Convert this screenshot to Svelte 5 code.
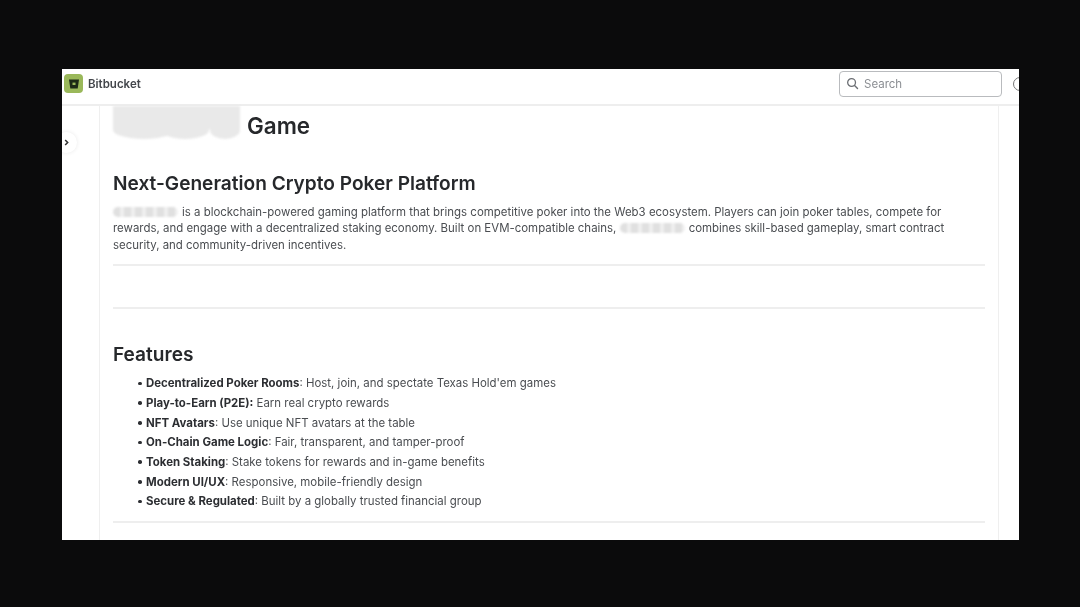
<script>
  const features = [
    ['Decentralized Poker Rooms', ': Host, join, and spectate Texas Hold\'em games'],
    ['Play-to-Earn (P2E):', ' Earn real crypto rewards'],
    ['NFT Avatars', ': Use unique NFT avatars at the table'],
    ['On-Chain Game Logic', ': Fair, transparent, and tamper-proof'],
    ['Token Staking', ': Stake tokens for rewards and in-game benefits'],
    ['Modern UI/UX', ': Responsive, mobile-friendly design'],
    ['Secure & Regulated', ': Built by a globally trusted financial group']
  ];
</script>

<div class="stage">
  <div class="window">
    <header class="topbar">
      <div class="brand">
        <span class="logo">
          <svg viewBox="0 0 12 12" width="12" height="12" aria-hidden="true">
            <path d="M1 1.6h10l-1.3 8.8H2.3z" fill="#1d2a16" />
            <rect x="4.5" y="4.6" width="3" height="2.4" fill="#9ab85a" />
          </svg>
        </span>
        <span class="brand-name">Bitbucket</span>
      </div>
      <div class="tools">
        <div class="search">
          <svg viewBox="0 0 14 14" width="13" height="13" aria-hidden="true">
            <circle cx="6" cy="6" r="4.2" fill="none" stroke="#6b6e73" stroke-width="1.4" />
            <path d="M9.2 9.2l3.2 3.2" stroke="#6b6e73" stroke-width="1.5" stroke-linecap="round" />
          </svg>
          <span>Search</span>
        </div>
        <span class="help"></span>
      </div>
    </header>

    <div class="body">
      <aside class="rail">
        <button class="expand" aria-label="Expand sidebar">
          <svg viewBox="0 0 8 8" width="7" height="7" aria-hidden="true">
            <path d="M2.5 1.2L5.3 4 2.5 6.8" fill="none" stroke="#333" stroke-width="1.8" />
          </svg>
        </button>
      </aside>
      <main class="panel">
        <div class="title-row">
          <div class="redact-title">
            <i></i><i></i><i></i>
          </div>
          <h1>Game</h1>
        </div>
        <h2 class="tagline">Next-Generation Crypto Poker Platform</h2>
        <p class="intro">
          <span class="redact first"></span>is a blockchain-powered gaming platform that brings competitive poker into the Web3 ecosystem. Players can join poker tables, compete for rewards, and engage with a decentralized staking economy. Built on EVM-compatible chains, <span class="redact second"></span>combines skill-based gameplay, smart contract security, and community-driven incentives.
        </p>
        <hr class="rule-a" />
        <hr class="rule-b" />
        <h2 class="features">Features</h2>
        <ul>
          {#each features as [name, text]}
            <li><strong>{name}</strong>{text}</li>
          {/each}
        </ul>
        <hr class="rule-c" />
      </main>
    </div>
  </div>
</div>

<style>
  :global(body) {
    margin: 0;
    background: #0b0b0c;
  }
  .stage {
    width: 1080px;
    height: 607px;
    padding: 69px 61px 67px 62px;
    box-sizing: border-box;
    overflow: hidden;
    font-family: Inter, "Liberation Sans", sans-serif;
    filter: blur(0.45px);
  }
  .window {
    height: 471px;
    background: #fff;
    display: flex;
    flex-direction: column;
    overflow: hidden;
  }
  .topbar {
    height: 37px;
    flex: none;
    box-sizing: border-box;
    border-bottom: 2px solid #eeeeee;
    display: flex;
    align-items: center;
    justify-content: space-between;
    padding: 0 0 6px 2px;
  }
  .brand {
    display: flex;
    align-items: center;
    gap: 5px;
  }
  .logo {
    width: 19px;
    height: 19px;
    border-radius: 4px;
    background: #9ab85a;
    display: flex;
    align-items: center;
    justify-content: center;
  }
  .brand-name {
    font-size: 11.5px;
    font-weight: 600;
    color: #43464b;
  }
  .tools {
    display: flex;
    align-items: center;
    gap: 11px;
    margin-right: -8px;
  }
  .search {
    width: 163px;
    height: 26px;
    box-sizing: border-box;
    border: 1.5px solid #b9bbbe;
    border-radius: 4px;
    display: flex;
    align-items: center;
    gap: 5px;
    padding-left: 6px;
    font-size: 11.5px;
    color: #8b8e93;
  }
  .help {
    width: 14px;
    height: 14px;
    box-sizing: border-box;
    border: 1.5px solid #777;
    border-radius: 50%;
  }
  .body {
    flex: 1;
    min-height: 0;
    display: flex;
  }
  .rail {
    width: 38px;
    flex: none;
    box-sizing: border-box;
    border-right: 1.5px solid #efefef;
    position: relative;
  }
  .expand {
    position: absolute;
    left: -6px;
    top: 26px;
    width: 21px;
    height: 21px;
    padding: 0;
    border: none;
    border-radius: 50%;
    background: #fff;
    box-shadow: 0 0 4px rgba(0, 0, 0, 0.09);
    display: flex;
    align-items: center;
    justify-content: center;
  }
  .panel {
    width: 898.5px;
    flex: none;
    box-sizing: border-box;
    border-right: 1.5px solid #efefef;
    padding: 0 13px 0 13px;
    color: #3f4246;
  }
  .title-row {
    display: flex;
    align-items: flex-start;
    height: 33px;
    gap: 7px;
  }
  .redact-title {
    width: 127px;
    height: 33px;
    position: relative;
    overflow: hidden;
    background: linear-gradient(#e9e9e9 0 70%, transparent 70%);
    filter: blur(0.8px);
  }
  .redact-title i {
    position: absolute;
    bottom: 0;
    height: 18px;
    background: #e9e9e9;
    border-radius: 50%;
  }
  .redact-title i:nth-child(1) { left: 0; width: 62px; }
  .redact-title i:nth-child(2) { left: 48px; width: 48px; }
  .redact-title i:nth-child(3) { left: 97px; width: 30px; }
  h1 {
    margin: 3px 0 0;
    font-size: 22.4px;
    line-height: 33px;
    font-weight: 600;
    color: #26282b;
  }
  h2 {
    margin: 0;
    font-size: 19.1px;
    line-height: 26px;
    font-weight: 600;
    color: #26282b;
  }
  .tagline {
    margin-top: 31px;
  }
  .intro {
    margin: 8px 0 0;
    font-size: 11.44px;
    line-height: 16.4px;
    color: #4a4d51;
  }
  .redact {
    display: inline-block;
    height: 10px;
    border-radius: 5px;
    background: repeating-linear-gradient(90deg, #e0e0e0 0 7px, #efefef 7px 11px);
    vertical-align: -1px;
    filter: blur(1px);
  }
  .first { width: 65px; margin-right: 4px; }
  .second { width: 65px; margin-right: 4px; }
  hr {
    border: none;
    height: 2px;
    background: #eeeeee;
    margin: 0;
  }
  .rule-a { margin-top: 11px; }
  .rule-b { margin-top: 41px; }
  .features { margin-top: 32px; }
  ul {
    margin: 7px 0 0;
    padding: 0 0 0 33px;
    list-style: none;
    font-size: 11.44px;
    line-height: 19.65px;
    color: #4a4d51;
  }
  li::before {
    content: "";
    display: inline-block;
    width: 3.5px;
    height: 3.5px;
    margin-left: -8px;
    margin-right: 4.5px;
    border-radius: 50%;
    background: #2c2e32;
    vertical-align: 2px;
  }
  strong {
    font-weight: 700;
    color: #2c2e32;
  }
  .rule-c { margin-top: 9px; }
</style>
